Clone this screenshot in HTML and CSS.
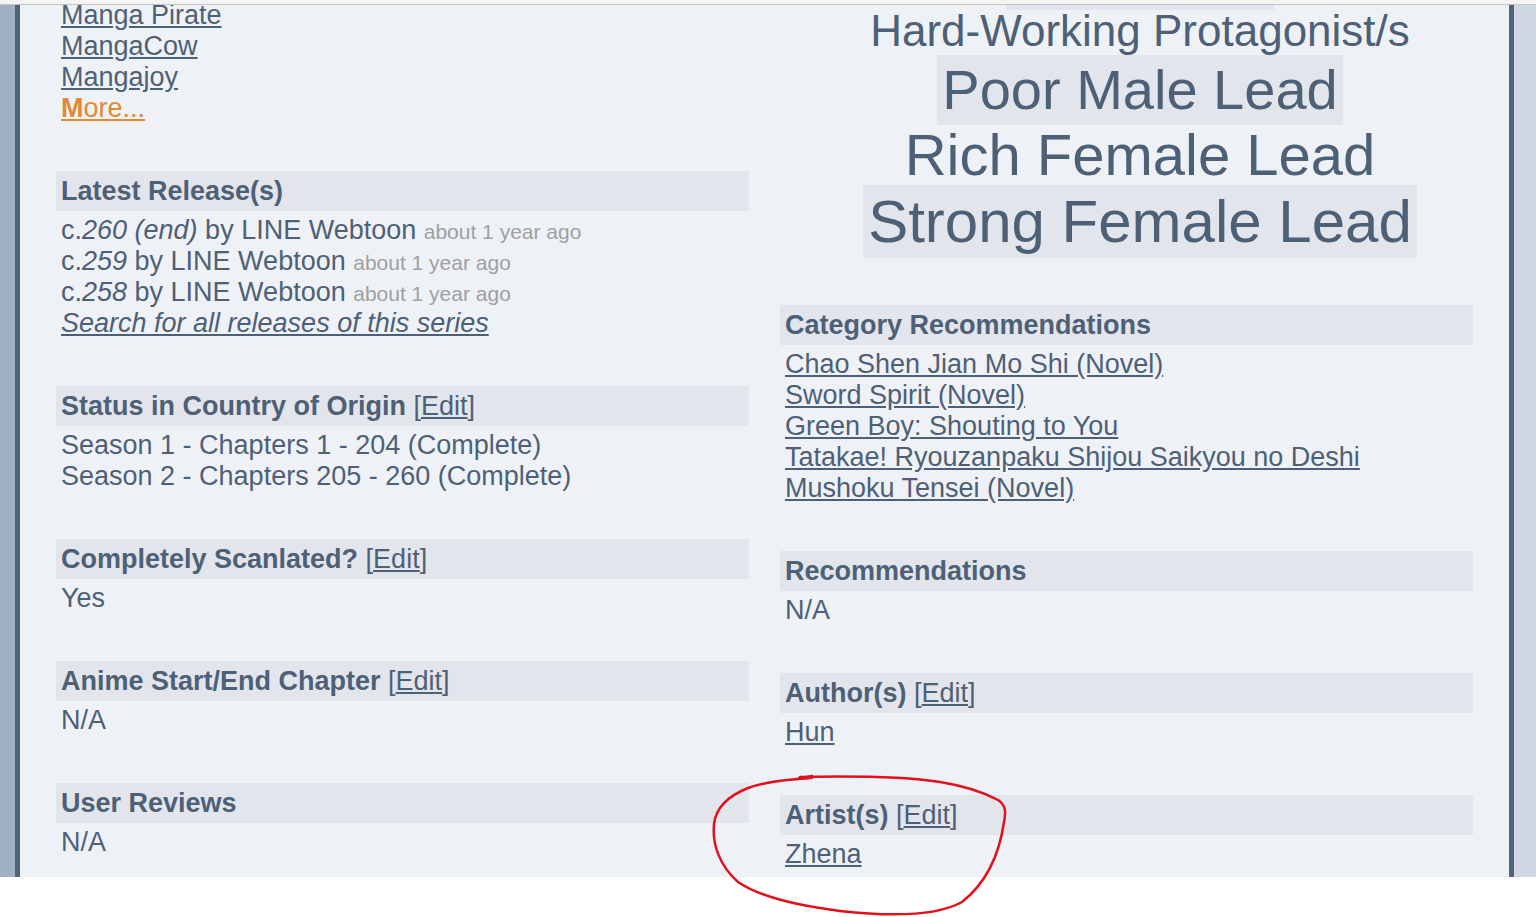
FILE: index.html
```html
<!DOCTYPE html>
<html lang="en">
  <head>
    <meta charset="UTF-8" />
    <meta name="viewport" content="width=device-width, initial-scale=1.0" />
    <title>Series Info</title>
    <link rel="stylesheet" href="styles.css">
  </head>
  <body>
    <div class="chrome"></div>
    <div class="page">
      <div class="rail-left"></div>
      <main class="content">
        <div class="col">
          <div class="section section-top">
            <div class="section-body">
              <a href="#">Manga Pirate</a><br />
              <a href="#">MangaCow</a><br />
              <a href="#">Mangajoy</a><br />
              <a href="#" class="more"><b>M</b>ore...</a>
            </div>
          </div>

          <div class="section">
            <div class="section-head">Latest Release(s)</div>
            <div class="section-body">
              c.<i>260 (end)</i> by LINE Webtoon <span class="ago">about 1 year ago</span><br />
              c.<i>259</i> by LINE Webtoon <span class="ago">about 1 year ago</span><br />
              c.<i>258</i> by LINE Webtoon <span class="ago">about 1 year ago</span><br />
              <a href="#"><i>Search for all releases of this series</i></a>
            </div>
          </div>

          <div class="section">
            <div class="section-head">Status in Country of Origin <span class="edit">[<a href="#">Edit</a>]</span></div>
            <div class="section-body">
              Season 1 - Chapters 1 - 204 (Complete)<br />
              Season 2 - Chapters 205 - 260 (Complete)
            </div>
          </div>

          <div class="section">
            <div class="section-head">Completely Scanlated? <span class="edit">[<a href="#">Edit</a>]</span></div>
            <div class="section-body">Yes</div>
          </div>

          <div class="section">
            <div class="section-head">Anime Start/End Chapter <span class="edit">[<a href="#">Edit</a>]</span></div>
            <div class="section-body">N/A</div>
          </div>

          <div class="section">
            <div class="section-head">User Reviews</div>
            <div class="section-body">N/A</div>
          </div>
        </div>

        <div class="col">
          <div class="tags">
            <div class="tag tag-cut alt"></div>
            <span class="tag tag-s1">Hard-Working Protagonist/s</span>
            <span class="tag tag-s2 alt">Poor Male Lead</span>
            <span class="tag tag-s3">Rich Female Lead</span>
            <span class="tag tag-s4 alt">Strong Female Lead</span>
          </div>

          <div class="section">
            <div class="section-head">Category Recommendations</div>
            <div class="section-body">
              <a href="#">Chao Shen Jian Mo Shi (Novel)</a><br />
              <a href="#">Sword Spirit (Novel)</a><br />
              <a href="#">Green Boy: Shouting to You</a><br />
              <a href="#">Tatakae! Ryouzanpaku Shijou Saikyou no Deshi</a><br />
              <a href="#">Mushoku Tensei (Novel)</a>
            </div>
          </div>

          <div class="section">
            <div class="section-head">Recommendations</div>
            <div class="section-body">N/A</div>
          </div>

          <div class="section">
            <div class="section-head">Author(s) <span class="edit">[<a href="#">Edit</a>]</span></div>
            <div class="section-body"><a href="#">Hun</a></div>
          </div>

          <div class="section">
            <div class="section-head">Artist(s) <span class="edit">[<a href="#">Edit</a>]</span></div>
            <div class="section-body"><a href="#">Zhena</a></div>
          </div>
        </div>
      </main>
      <div class="rail-right"></div>
    </div>

    <!-- hand drawn mark around the artist block -->
    <svg class="scribble" width="1536" height="917" viewBox="0 0 1536 917">
      <path d="M797 779 L812 776" />
      <path d="M800 777 C850 776 900 776 940 782 C965 786 985 793 998 800 C1006 805 1006 812 1004 822 C1000 850 990 880 962 902 C935 917 885 916 840 911 C800 906 760 897 738 882 C720 866 712 845 714 824 C716 807 728 796 748 788 C768 781 790 779 812 778" />
    </svg>
  </body>
</html>
```

FILE: styles.css
```css
body {
  margin: 0;
  background-color: #fff;
  font-family: "Liberation Sans", Arial, sans-serif;
  font-size: 27px;
  line-height: 31px;
  color: #4e6076;
  overflow: hidden;
}

a {
  color: #4e6076;
}

.chrome {
  height: 4px;
  background-color: #f4f4f4;
  border-bottom: 1px solid #c4c4c4;
}

.page {
  display: flex;
  height: 872px;
  overflow: hidden;
}

.rail-left {
  width: 15px;
  background-color: #a1b0c3;
  border-right: 5px solid #4f6379;
}

.rail-right {
  width: 22px;
  background-color: #cfd8e2;
  border-left: 5px solid #4f6379;
}

.content {
  flex: 1;
  display: grid;
  grid-template-columns: 1fr 1fr;
  column-gap: 31px;
  align-items: start;
  padding: 0 36px;
  background-color: #eef2f7;
  overflow: hidden;
}

.section {
  margin-bottom: 47px;
}

.section-top {
  margin-top: -5px;
}

.section-head {
  background-color: #e2e6ec;
  padding: 5px 5px 4px;
  margin-bottom: 4px;
  font-weight: bold;
}

.edit {
  font-weight: normal;
}

.section-body {
  padding: 0 5px;
}

.ago {
  font-size: 21px;
  line-height: 1;
  color: #a0a0a0;
}

.more {
  color: #e08a36;
}

.tags {
  display: flex;
  flex-direction: column;
  align-items: center;
  padding-left: 27px;
  margin-bottom: 47px;
}

.tag {
  padding: 0 5px;
  white-space: nowrap;
}

.tag.alt {
  background-color: #e2e6ec;
}

.tag-cut {
  width: 258px;
  height: 5px;
}

.tag-s1 {
  font-size: 44px;
  line-height: 42px;
  padding-bottom: 3px;
}

.tag-s2 {
  font-size: 56px;
  line-height: 70px;
}

.tag-s3 {
  font-size: 58px;
  line-height: 60px;
}

.tag-s4 {
  font-size: 60px;
  line-height: 73px;
}

.scribble {
  position: absolute;
  top: 0;
  left: 0;
  pointer-events: none;
}

.scribble path {
  fill: none;
  stroke: #e3101a;
  stroke-width: 2.5;
  stroke-linecap: round;
  stroke-linejoin: round;
}
```
